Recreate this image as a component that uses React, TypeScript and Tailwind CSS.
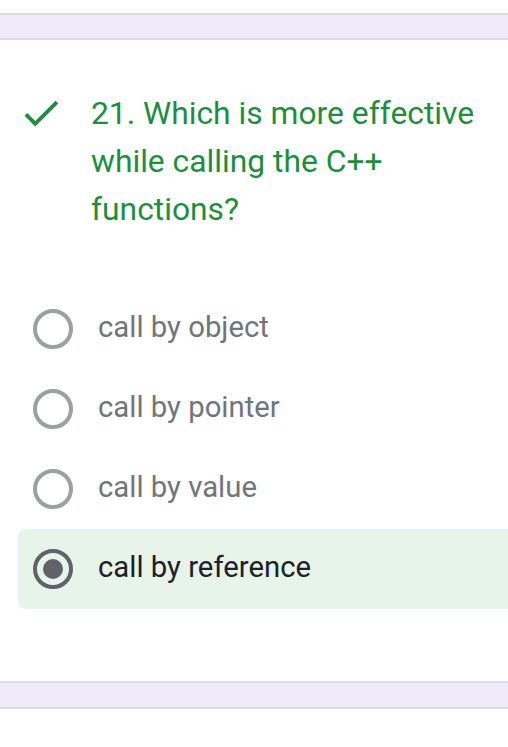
import React from "react";

const options = [
  { label: "call by object", selected: false },
  { label: "call by pointer", selected: false },
  { label: "call by value", selected: false },
  { label: "call by reference", selected: true },
];

function Radio({ selected }: { selected: boolean }) {
  return (
    <svg width="48" height="48" viewBox="0 0 24 24" className="shrink-0">
      <circle cx="12" cy="12" r="9" fill="none" stroke={selected ? "#5f6368" : "#9aa0a6"} strokeWidth="2" />
      {selected && <circle cx="12" cy="12" r="5" fill="#5f6368" />}
    </svg>
  );
}

export default function App() {
  return (
    <div className="w-[508px] h-[747px] bg-white overflow-hidden flex flex-col" style={{ fontFamily: "Roboto, 'Noto Sans', sans-serif" }}>
      <div className="mt-[13px] h-[27px] bg-[#eeeaf8] border-y-2 border-[#dadce0]" />
      <div className="mt-[49px] flex items-start pl-[18px] pr-[16px]">
        <svg width="46" height="46" viewBox="0 0 24 24" className="shrink-0 mt-[1px]">
          <path d="M9 16.17L4.83 12l-1.42 1.41L9 19 21 7l-1.41-1.41z" fill="#1e8e3e" />
        </svg>
        <div className="ml-[27px] text-[31.8px] leading-[48px] text-[#1e8e3e]">
          21. Which is more effective while calling the C++ functions?
        </div>
      </div>
      <div className="mt-[56px] flex flex-col pl-[18px]">
        {options.map((o) => (
          <div
            key={o.label}
            className={`h-[80px] flex items-center pl-[11px] rounded-l-lg ${o.selected ? "bg-[#e6f4ea]" : ""}`}
          >
            <Radio selected={o.selected} />
            <span className={`ml-[21px] mb-[3px] text-[29.3px] ${o.selected ? "text-[#202124]" : "text-[#70757a]"}`}>{o.label}</span>
          </div>
        ))}
      </div>
      <div className="mt-[72px] h-[28px] bg-[#eeeaf8] border-y-2 border-[#dadce0]" />
    </div>
  );
}
